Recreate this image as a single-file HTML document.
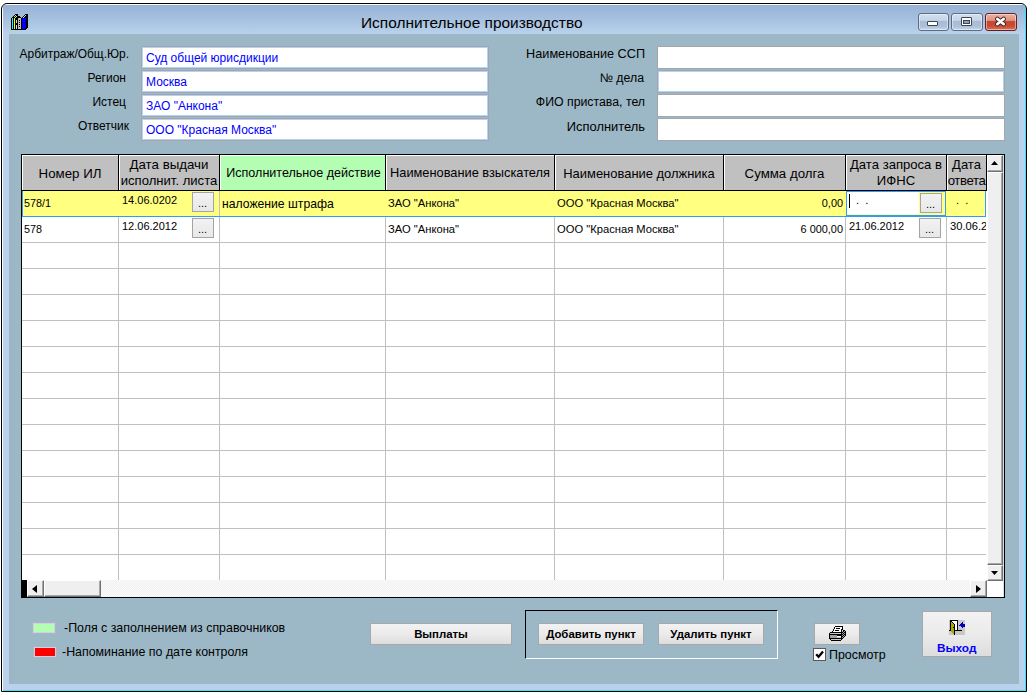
<!DOCTYPE html>
<html><head><meta charset="utf-8">
<style>
*{box-sizing:border-box;margin:0;padding:0}
html,body{width:1029px;height:693px;overflow:hidden;background:#fff;font-family:"Liberation Sans",sans-serif;}
.a{position:absolute}
#frame{left:1px;top:3px;width:1026px;height:689px;border:1px solid #000;border-radius:6px 6px 0 0;background:#b9d1ea;overflow:hidden;box-shadow:inset 1px 1px 0 #fff,inset -1px -1px 0 #3ee0f8}
#title{left:1px;top:1px;width:1022px;height:29px;background:linear-gradient(#97b2d5,#aac4e2 60%,#b9d2ec)}
#client{left:9px;top:34px;width:1010px;height:650px;background:#9cb8c6}
.lbl{font-size:12px;color:#000;white-space:nowrap;text-align:right}
.fld{background:#fff;border:1px solid #a4a6ae;height:23px}
.fb{box-shadow:inset 0 0 0 1px #b4d2f6}
.ftx{font-size:12px;color:#0000ff;white-space:nowrap}
.tb{border:1px solid #5d6c82;border-radius:3px;height:18px;background:linear-gradient(#d2dfee,#c5d5e8 40%,#a8bdd5 45%,#aac0d8 75%,#c4d6ea);box-shadow:inset 0 0 0 1px rgba(255,255,255,.45)}
.ht{font-size:12.8px;line-height:15px;text-align:center;white-space:nowrap;color:#000}
.ct{font-size:11.2px;line-height:13px;white-space:nowrap;color:#000}
.btn3{width:22px;height:20px;background:linear-gradient(#f2f2f2,#e8e8e8);border:1px solid #a4a4a4}
.btn3::after{content:"...";position:absolute;left:5px;top:4px;font-size:11px;color:#000}
.sb{background:#efefef;border-top:1px solid #fff;border-left:1px solid #fff;border-right:1px solid #707070;border-bottom:1px solid #707070;box-shadow:inset -1px -1px 0 #a8a8a8}
.wbtn{background:linear-gradient(#f2f2f2,#ebebeb 50%,#dddddd);border:1px solid #a8a8a8;font-weight:bold;font-size:11.4px;text-align:center;line-height:20px;color:#000;white-space:nowrap}
</style></head>
<body>
<div id="frame" class="a">
  <div id="title" class="a"></div>
</div>
<!-- app icon -->
<svg class="a" style="left:9px;top:11px" width="20" height="20" viewBox="0 0 20 20" shape-rendering="crispEdges">
 <path d="M2 7H3V6H4V5H5V4H6V3H9V5H11V6H12V19H2z" fill="#000"/>
 <path d="M12 7H13V6H14V5H15V4H16V3H19V17H18V18H17V19H12z" fill="#000"/>
 <rect x="3" y="7" width="1" height="11" fill="#00ffff"/>
 <rect x="5" y="7" width="1" height="11" fill="#ffff00"/>
 <rect x="6" y="6" width="1" height="1" fill="#ffff00"/><rect x="7" y="5" width="1" height="1" fill="#ffff00"/>
 <rect x="5" y="5" width="1" height="1" fill="#d8d0c8"/><rect x="6" y="4" width="1" height="1" fill="#d8d0c8"/>
 <rect x="7" y="9" width="1" height="3" fill="#e0e0e0"/><rect x="7" y="14" width="1" height="4" fill="#e0e0e0"/>
 <rect x="9" y="7" width="3" height="11" fill="#c8c0b8"/>
 <rect x="10" y="9" width="1" height="1" fill="#000"/><rect x="10" y="11" width="1" height="1" fill="#000"/><rect x="10" y="13" width="1" height="1" fill="#000"/><rect x="10" y="15" width="1" height="1" fill="#000"/>
 <rect x="13" y="7" width="3" height="11" fill="#0000ff"/>
 <rect x="16" y="6" width="1" height="11" fill="#0000d0"/>
 <rect x="14" y="6" width="1" height="1" fill="#e0dcd0"/><rect x="15" y="5" width="1" height="1" fill="#e0dcd0"/><rect x="16" y="4" width="1" height="1" fill="#e0dcd0"/>
</svg>
<div class="a" style="left:361px;top:14px;font-size:15.45px;color:#000;white-space:nowrap">Исполнительное производство</div>
<!-- title buttons -->
<div class="a tb" style="left:918px;top:13px;width:31px;height:18px"></div>
<div class="a" style="left:927px;top:21px;width:11px;height:5px;background:#fff;border:1px solid #3c4450;border-radius:1px"></div>
<div class="a tb" style="left:951px;top:13px;width:32px;height:18px"></div>
<div class="a" style="left:961px;top:17px;width:11px;height:9px;background:#fff;border:1px solid #3c4450;border-radius:1px"></div>
<div class="a" style="left:963px;top:20px;width:7px;height:4px;background:#8aa0bc;border:1px solid #3c4450"></div>
<div class="a tb" style="left:985px;top:13px;width:32px;height:18px;border-color:#6a1c22;background:linear-gradient(#eab0a2,#e19482 40%,#c8482e 45%,#c64c32 75%,#d9785c)"></div>
<svg class="a" style="left:994px;top:16px" width="13" height="11" viewBox="0 0 13 11"><path d="M3.4 3L9.6 8M9.6 3L3.4 8" stroke="#40282a" stroke-width="4.6" stroke-linecap="round"/><path d="M3.4 3L9.6 8M9.6 3L3.4 8" stroke="#fff" stroke-width="2.8" stroke-linecap="round"/></svg>
<div id="client" class="a"></div>
<div class="a" style="left:9px;top:34px;width:5px;height:650px;background:#9cb6c8"></div>

<!-- labels left -->
<div class="a lbl" style="left:0;width:129px;top:47px;font-size:11.95px">Арбитраж/Общ.Юр.</div>
<div class="a lbl" style="left:0;width:126px;top:71px">Регион</div>
<div class="a lbl" style="left:0;width:126px;top:95px">Истец</div>
<div class="a lbl" style="left:0;width:129px;top:119px">Ответчик</div>
<div class="a fld fb" style="left:141px;top:46px;width:348px"></div>
<div class="a fld fb" style="left:141px;top:70px;width:348px"></div>
<div class="a fld fb" style="left:141px;top:94px;width:348px"></div>
<div class="a fld fb" style="left:141px;top:118px;width:348px"></div>
<div class="a ftx" style="left:146px;top:51px">Суд общей юрисдикции</div>
<div class="a ftx" style="left:146px;top:75px">Москва</div>
<div class="a ftx" style="left:146px;top:99px">ЗАО "Анкона"</div>
<div class="a ftx" style="left:146px;top:123px">ООО "Красная Москва"</div>
<!-- labels right -->
<div class="a lbl" style="left:400px;width:245px;top:47px;font-size:12.7px">Наименование ССП</div>
<div class="a lbl" style="left:400px;width:244px;top:71px;font-size:12.3px">№ дела</div>
<div class="a lbl" style="left:400px;width:245px;top:95px;font-size:12.3px">ФИО пристава, тел</div>
<div class="a lbl" style="left:400px;width:245px;top:119px;font-size:12.9px">Исполнитель</div>
<div class="a fld" style="left:657px;top:46px;width:348px"></div>
<div class="a fld fb" style="left:657px;top:70px;width:348px"></div>
<div class="a fld" style="left:657px;top:94px;width:348px"></div>
<div class="a fld" style="left:657px;top:118px;width:348px"></div>


<!-- GRID -->
<div class="a" style="left:21px;top:154px;width:984px;height:444px;background:#000"></div>
<div class="a" style="left:22px;top:155px;width:982px;height:442px;background:#fff"></div>
<div class="a" style="left:1003px;top:155px;width:1px;height:442px;background:#d4e0e6"></div>
<!-- header -->
<div class="a" style="left:22px;top:155px;width:965px;height:35px;background:#c0c0c0;border-top:1px solid #fff;border-left:1px solid #fff"></div>
<div class="a" style="left:220px;top:156px;width:165px;height:34px;background:#b4feb4"></div>
<div class="a" style="left:22px;top:190px;width:965px;height:1px;background:#000"></div>
<div class="a" style="left:118px;top:155px;width:1px;height:35px;background:#000"></div><div class="a" style="left:119px;top:155px;width:1px;height:35px;background:#fff"></div><div class="a" style="left:219px;top:155px;width:1px;height:35px;background:#000"></div><div class="a" style="left:220px;top:155px;width:1px;height:35px;background:#fff"></div><div class="a" style="left:385px;top:155px;width:1px;height:35px;background:#000"></div><div class="a" style="left:386px;top:155px;width:1px;height:35px;background:#fff"></div><div class="a" style="left:554px;top:155px;width:1px;height:35px;background:#000"></div><div class="a" style="left:555px;top:155px;width:1px;height:35px;background:#fff"></div><div class="a" style="left:723px;top:155px;width:1px;height:35px;background:#000"></div><div class="a" style="left:724px;top:155px;width:1px;height:35px;background:#fff"></div><div class="a" style="left:845px;top:155px;width:1px;height:35px;background:#000"></div><div class="a" style="left:846px;top:155px;width:1px;height:35px;background:#fff"></div><div class="a" style="left:946px;top:155px;width:1px;height:35px;background:#000"></div><div class="a" style="left:947px;top:155px;width:1px;height:35px;background:#fff"></div><div class="a" style="left:986px;top:155px;width:1px;height:35px;background:#000"></div>
<!-- body lines -->
<div class="a" style="left:22px;top:217px;width:964px;height:363px;background:repeating-linear-gradient(to bottom,transparent 0 25px,#c0c0c0 25px 26px)"></div>
<div class="a" style="left:118px;top:191px;width:1px;height:389px;background:#c0c0c0"></div><div class="a" style="left:219px;top:191px;width:1px;height:389px;background:#c0c0c0"></div><div class="a" style="left:385px;top:191px;width:1px;height:389px;background:#c0c0c0"></div><div class="a" style="left:554px;top:191px;width:1px;height:389px;background:#c0c0c0"></div><div class="a" style="left:723px;top:191px;width:1px;height:389px;background:#c0c0c0"></div><div class="a" style="left:845px;top:191px;width:1px;height:389px;background:#c0c0c0"></div><div class="a" style="left:946px;top:191px;width:1px;height:389px;background:#c0c0c0"></div>


<!-- header text -->
<div class="a ht" style="left:22px;width:96px;top:166px;font-size:13.3px">Номер ИЛ</div>
<div class="a ht" style="left:119px;width:100px;top:157px;font-size:13.3px">Дата выдачи</div>
<div class="a ht" style="left:119px;width:100px;top:173px;font-size:13.1px">исполнит. листа</div>
<div class="a ht" style="left:221px;width:165px;top:166px;font-size:12.55px">Исполнительное действие</div>
<div class="a ht" style="left:386px;width:168px;top:165px;font-size:12.8px">Наименование взыскателя</div>
<div class="a ht" style="left:555px;width:168px;top:166px;font-size:12.95px">Наименование должника</div>
<div class="a ht" style="left:724px;width:121px;top:166px;font-size:13.25px">Сумма долга</div>
<div class="a ht" style="left:846px;width:100px;top:157px;font-size:13.1px">Дата запроса в</div>
<div class="a ht" style="left:846px;width:100px;top:173px;font-size:13.1px">ИФНС</div>
<div class="a ht" style="left:947px;width:39px;top:157px;font-size:13px">Дата</div>
<div class="a ht" style="left:947px;width:39px;top:173px;font-size:13.2px;letter-spacing:-0.4px">ответа</div>
<!-- row 1 (selected) -->
<div class="a" style="left:22px;top:191px;width:964px;height:26px;background:#ffff80;border-left:1px solid #3399ff;border-bottom:1px solid #3399ff;border-right:1px solid #3399ff"></div>
<div class="a" style="left:219px;top:191px;width:1px;height:25px;background:#c0c0c0"></div>
<div class="a" style="left:846px;top:191px;width:100px;height:25px;background:#ffff80;border:1px solid #3399ff"></div>
<div class="a" style="left:847px;top:192px;width:72px;height:22px;background:#fff"></div>
<div class="a ct" style="left:24px;top:197px;font-size:10.8px">578/1</div>
<div class="a ct" style="left:122px;top:194px;font-size:11px">14.06.0202</div>
<div class="a btn3" style="left:192px;top:192px"></div>
<div class="a ct" style="left:222px;top:198px;font-size:12.2px">наложение штрафа</div>
<div class="a ct" style="left:388px;top:197px">ЗАО "Анкона"</div>
<div class="a ct" style="left:557px;top:197px">ООО "Красная Москва"</div>
<div class="a ct" style="left:724px;width:119px;text-align:right;top:197px;font-size:10.9px">0,00</div>
<div class="a" style="left:849px;top:194px;width:1px;height:14px;background:#000"></div>
<div class="a ct" style="left:856px;top:194px">.&nbsp;&nbsp;.</div>
<div class="a btn3" style="left:920px;top:193px"></div>
<div class="a ct" style="left:956px;top:194px">.&nbsp;&nbsp;.</div>
<!-- row 2 -->
<div class="a ct" style="left:24px;top:223px;font-size:10.8px">578</div>
<div class="a ct" style="left:122px;top:220px;font-size:11px">12.06.2012</div>
<div class="a btn3" style="left:192px;top:218px"></div>
<div class="a ct" style="left:388px;top:223px">ЗАО "Анкона"</div>
<div class="a ct" style="left:557px;top:223px">ООО "Красная Москва"</div>
<div class="a ct" style="left:724px;width:119px;text-align:right;top:223px;font-size:10.9px">6 000,00</div>
<div class="a ct" style="left:849px;top:220px;font-size:11px">21.06.2012</div>
<div class="a btn3" style="left:919px;top:218px"></div>
<div class="a ct" style="left:950px;top:220px;font-size:11.2px;width:36px;overflow:hidden">30.06.2012</div>


<!-- vertical scrollbar -->
<div class="a sb" style="left:987px;top:155px;width:16px;height:17px"></div>
<svg class="a" style="left:991px;top:161px" width="7" height="4"><path d="M3.5 0L7 4H0z" fill="#000"/></svg>
<div class="a sb" style="left:987px;top:172px;width:16px;height:393px"></div>
<div class="a sb" style="left:987px;top:565px;width:16px;height:16px"></div>
<svg class="a" style="left:991px;top:571px" width="7" height="4"><path d="M0 0H7L3.5 4z" fill="#000"/></svg>
<!-- horizontal scrollbar -->
<div class="a" style="left:22px;top:580px;width:965px;height:17px;background:repeating-conic-gradient(#f0f0f0 0 25%,#fbfbfb 0 50%) 0 0/2px 2px"></div>
<div class="a" style="left:22px;top:580px;width:5px;height:17px;background:#000"></div>
<div class="a sb" style="left:27px;top:580px;width:17px;height:17px"></div>
<svg class="a" style="left:32px;top:585px" width="5" height="8"><path d="M5 0V8L0 4z" fill="#000"/></svg>
<div class="a sb" style="left:44px;top:580px;width:57px;height:17px"></div>
<div class="a sb" style="left:970px;top:580px;width:17px;height:17px"></div>
<svg class="a" style="left:976px;top:585px" width="5" height="8"><path d="M0 0V8L5 4z" fill="#000"/></svg>

<!-- legend -->
<div class="a" style="left:32px;top:622px;width:24px;height:12px;background:#b4feb4;border:1px solid #b0b4c0;box-shadow:inset 0 0 0 1px #c8d4e4"></div>
<div class="a" style="left:33px;top:646px;width:24px;height:12px;background:#ff0000;border:1px solid #b0b4c0;box-shadow:inset 0 0 0 1px #c8d4e4"></div>
<div class="a lbl" style="left:64px;top:621px;font-size:12.4px;text-align:left">-Поля с заполнением из справочников</div>
<div class="a lbl" style="left:62px;top:645px;font-size:12.4px;text-align:left">-Напоминание по дате контроля</div>

<!-- buttons -->
<div class="a wbtn" style="left:370px;top:623px;width:142px;height:22px">Выплаты</div>
<div class="a" style="left:525px;top:610px;width:253px;height:49px;border-top:1px solid #000;border-left:1px solid #000;border-bottom:1px solid #fff;border-right:1px solid #fff"></div>
<div class="a wbtn" style="left:538px;top:623px;width:106px;height:22px">Добавить пункт</div>
<div class="a wbtn" style="left:658px;top:623px;width:106px;height:22px">Удалить пункт</div>
<div class="a wbtn" style="left:814px;top:623px;width:46px;height:22px"></div>
<svg class="a" style="left:824px;top:620px" width="26" height="26" viewBox="0 0 26 26" shape-rendering="crispEdges"><rect x="11" y="6" width="8" height="1" fill="#000"/><rect x="10" y="7" width="1" height="1" fill="#000"/><rect x="11" y="7" width="7" height="1" fill="#fff"/><rect x="18" y="7" width="1" height="1" fill="#000"/><rect x="10" y="8" width="1" height="1" fill="#000"/><rect x="11" y="8" width="1" height="1" fill="#fff"/><rect x="12" y="8" width="4" height="1" fill="#000"/><rect x="16" y="8" width="2" height="1" fill="#fff"/><rect x="18" y="8" width="1" height="1" fill="#000"/><rect x="9" y="9" width="1" height="1" fill="#000"/><rect x="10" y="9" width="7" height="1" fill="#fff"/><rect x="17" y="9" width="2" height="1" fill="#000"/><rect x="9" y="10" width="1" height="1" fill="#000"/><rect x="10" y="10" width="1" height="1" fill="#fff"/><rect x="11" y="10" width="4" height="1" fill="#000"/><rect x="15" y="10" width="2" height="1" fill="#fff"/><rect x="17" y="10" width="1" height="1" fill="#000"/><rect x="19" y="10" width="2" height="1" fill="#000"/><rect x="8" y="11" width="1" height="1" fill="#000"/><rect x="9" y="11" width="8" height="1" fill="#fff"/><rect x="17" y="11" width="1" height="1" fill="#000"/><rect x="18" y="11" width="1" height="1" fill="#a0a0a0"/><rect x="19" y="11" width="1" height="1" fill="#000"/><rect x="20" y="11" width="1" height="1" fill="#a0a0a0"/><rect x="21" y="11" width="1" height="1" fill="#000"/><rect x="6" y="12" width="12" height="1" fill="#000"/><rect x="18" y="12" width="1" height="1" fill="#000"/><rect x="19" y="12" width="1" height="1" fill="#a0a0a0"/><rect x="20" y="12" width="2" height="1" fill="#000"/><rect x="5" y="13" width="1" height="1" fill="#000"/><rect x="6" y="13" width="11" height="1" fill="#c8c8c8"/><rect x="17" y="13" width="1" height="1" fill="#000"/><rect x="18" y="13" width="1" height="1" fill="#a0a0a0"/><rect x="19" y="13" width="1" height="1" fill="#000"/><rect x="20" y="13" width="1" height="1" fill="#a0a0a0"/><rect x="21" y="13" width="1" height="1" fill="#000"/><rect x="5" y="14" width="13" height="1" fill="#000"/><rect x="18" y="14" width="1" height="1" fill="#000"/><rect x="19" y="14" width="1" height="1" fill="#a0a0a0"/><rect x="20" y="14" width="2" height="1" fill="#000"/><rect x="5" y="15" width="1" height="1" fill="#000"/><rect x="6" y="15" width="7" height="1" fill="#a0a0a0"/><rect x="13" y="15" width="5" height="1" fill="#000"/><rect x="18" y="15" width="1" height="1" fill="#a0a0a0"/><rect x="19" y="15" width="1" height="1" fill="#000"/><rect x="20" y="15" width="1" height="1" fill="#a0a0a0"/><rect x="21" y="15" width="1" height="1" fill="#000"/><rect x="5" y="16" width="1" height="1" fill="#000"/><rect x="6" y="16" width="7" height="1" fill="#a0a0a0"/><rect x="13" y="16" width="4" height="1" fill="#fff"/><rect x="17" y="16" width="2" height="1" fill="#000"/><rect x="19" y="16" width="1" height="1" fill="#a0a0a0"/><rect x="20" y="16" width="1" height="1" fill="#000"/><rect x="5" y="17" width="1" height="1" fill="#000"/><rect x="6" y="17" width="7" height="1" fill="#a0a0a0"/><rect x="13" y="17" width="4" height="1" fill="#c8c8c8"/><rect x="17" y="17" width="1" height="1" fill="#000"/><rect x="18" y="17" width="1" height="1" fill="#a0a0a0"/><rect x="19" y="17" width="1" height="1" fill="#000"/><rect x="5" y="18" width="13" height="1" fill="#000"/><rect x="18" y="18" width="1" height="1" fill="#000"/><rect x="6" y="19" width="1" height="1" fill="#000"/><rect x="7" y="19" width="10" height="1" fill="#c8c8c8"/><rect x="17" y="19" width="1" height="1" fill="#000"/><rect x="7" y="20" width="10" height="1" fill="#000"/></svg>
<div class="a" style="left:813px;top:648px;width:13px;height:13px;background:#fff;border:1px solid #5a5a5a"></div>
<svg class="a" style="left:815px;top:650px" width="9" height="9" viewBox="0 0 9 9"><path d="M1.2 4.2L3.6 6.8L8 1.6" stroke="#000" stroke-width="2.3" fill="none"/></svg>
<div class="a lbl" style="left:829px;top:648px;font-size:12.4px;text-align:left">Просмотр</div>
<div class="a wbtn" style="left:922px;top:611px;width:70px;height:46px"></div>
<div class="a" style="left:937px;top:641px;font-size:11.8px;font-weight:bold;color:#0000ff;white-space:nowrap">Выход</div>
<svg class="a" style="left:944px;top:614px" width="26" height="26" viewBox="0 0 26 26" shape-rendering="crispEdges">
 <path d="M5 6h16v15H5z" fill="#c8c8c8"/>
 <path d="M6 6h8v10h4v1H5v-1h1z" fill="#000"/>
 <path d="M8 7h5v9H8z" fill="#fff"/>
 <path d="M7 7h1v1h1v1h1v1h1v11h-1v-1H9v-1H8v-1H7z" fill="#000"/>
 <path d="M7 8h1v1h1v1h1v10H9v-1H8v-1H7z" fill="#a8a800"/>
 <path d="M9 13h1v1H9z" fill="#000"/>
 <path d="M18 8h1v6h-1zM17 9h1v4h-1zM16 10h1v2h-1zM15 11h1v1h-1z M19 10h2v3h-2z" fill="#0000c0"/>
</svg>

</body></html>
